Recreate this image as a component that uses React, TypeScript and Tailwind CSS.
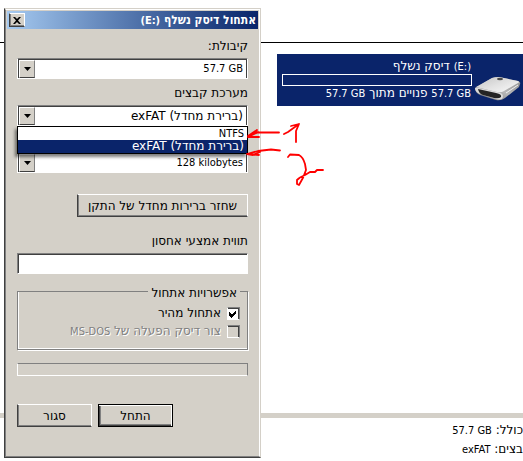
import type { ReactNode } from "react";

const LATIN = "font-['DejaVu_Sans_Condensed','DejaVu_Sans',sans-serif] text-[11px]";

const RAISED =
  "border border-t-white border-r-white border-b-[#404040] border-l-[#404040] shadow-[inset_1px_-1px_0_#808080]";

const isLatin = (s: string) => /^[\x20-\x7e]+$/.test(s);

function Ltr({ children }: { children: ReactNode }) {
  return (
    <bdi dir="ltr" className={LATIN}>
      {children}
    </bdi>
  );
}

interface ComboProps {
  id: string;
  label?: string;
  options: string[];
  value: string;
  open?: boolean;
}

function Combo({ id, label, options, value, open }: ComboProps) {
  return (
    <div>
      {label && (
        <label htmlFor={id} className="block h-5 leading-4">
          {label}
        </label>
      )}
      <div className="relative flex h-[21px] flex-row-reverse border border-t-[#808080] border-r-white border-b-white border-l-white bg-white">
        <span className="pointer-events-none flex w-[17px] shrink-0 border-t border-l border-[#404040]">
          <span className="flex flex-1 items-center justify-center border border-t-white border-r-[#808080] border-b-[#404040] border-l-white bg-[#d4d0c8]">
            <svg width="7" height="4" viewBox="0 0 7 4" aria-hidden="true">
              <path d="M0 0H7L3.5 4Z" fill="#000" />
            </svg>
          </span>
        </span>
        <select
          id={id}
          dir={isLatin(value) ? "ltr" : "rtl"}
          aria-label={label ?? "גודל יחידת הקצאה"}
          defaultValue={value}
          className={`min-w-0 flex-1 appearance-none border-t border-r border-[#404040] bg-white pr-[3px] text-right outline-none ${
            isLatin(value) ? LATIN : ""
          }`}
        >
          {options.map((o) => (
            <option key={o}>{o}</option>
          ))}
        </select>
        {open && (
          <ul className="absolute top-full -right-px -left-px z-10 mt-px border border-black bg-white leading-[13px] shadow-[-2px_3px_3px_rgba(0,0,0,0.5)]">
            {options.map((o) => (
              <li
                key={o}
                className={`h-[13px] px-[3px] ${o === value ? "bg-[#0a246a] text-white" : ""} ${isLatin(o) ? LATIN : ""}`}
              >
                {o}
              </li>
            ))}
          </ul>
        )}
      </div>
    </div>
  );
}

interface CheckProps {
  children: ReactNode;
  checked?: boolean;
  disabled?: boolean;
}

function Check({ children, checked, disabled }: CheckProps) {
  return (
    <label
      className={`flex h-[18px] items-center gap-[6px] whitespace-nowrap ${
        disabled ? "text-[#808080] [text-shadow:1px_1px_0_#fff]" : ""
      }`}
    >
      <span className="relative flex">
        <input
          type="checkbox"
          defaultChecked={checked}
          disabled={disabled}
          className={`size-[13px] appearance-none border border-t-[#808080] border-r-[#808080] border-b-white border-l-white shadow-[inset_-1px_1px_0_#404040] ${
            disabled ? "bg-[#d4d0c8]" : "bg-white"
          }`}
        />
        {checked && (
          <svg
            className="pointer-events-none absolute inset-0"
            width="13"
            height="13"
            viewBox="0 0 13 13"
            shapeRendering="crispEdges"
            aria-hidden="true"
          >
            <path d="M2 5h1v1h1v1h1v1h0v-1h1v-1h1v-1h1v-1h1v3h-1v1h-1v1h-1v1h-1v1h-1v-1h-1v-1h-1Z" fill="#000" />
          </svg>
        )}
      </span>
      <span>{children}</span>
    </label>
  );
}

function DriveIcon() {
  return (
    <svg width="46" height="24" viewBox="0 0 46 24" aria-hidden="true">
      <defs>
        <linearGradient id="top" x1="0" y1="0" x2="1" y2="1">
          <stop offset="0" stopColor="#c4c4c4" />
          <stop offset="0.5" stopColor="#e2e2e2" />
          <stop offset="1" stopColor="#fafafa" />
        </linearGradient>
        <linearGradient id="side" x1="0" y1="1" x2="1" y2="0">
          <stop offset="0" stopColor="#6a6a6a" />
          <stop offset="0.5" stopColor="#b8b8b8" />
          <stop offset="1" stopColor="#8c8c8c" />
        </linearGradient>
      </defs>
      <path d="M0 11 17 1Q20 0 24 0L43 4Q46 5 45 7L44 10 30 21Q26 24 21 23L5 18Q0 16 0 11Z" fill="url(#side)" />
      <path d="M1 10 17 1Q20 0 24 0L43 4Q45 5 43 6L29 14Q26 16 22 15L5 11Z" fill="url(#top)" />
      <path d="M0 11Q1 10 4 11L22 15Q28 16 28 19Q28 24 21 22L5 17Q0 15 0 11Z" fill="#dcdcdc" />
      <path d="M3 12 21 16Q27 17 26 20Q24 22 19 21L8 18Q4 17 3 12Z" fill="#242424" />
      <ellipse cx="25" cy="2" rx="3" ry="1.300" fill="#4a4a4a" />
      <path d="M31 16 43 8" stroke="#f2f2f2" strokeWidth="1" />
    </svg>
  );
}

function Explorer() {
  return (
    <main className="flex min-h-screen flex-col bg-white">
      <div className="h-[43px] border-b border-black" />
      <section className="flex-1 pt-[11px]">
        <div className="ml-[277px] flex h-[52px] items-center bg-[#0a246a] pl-[5px] text-white">
          <div className="w-[51px] shrink-0 self-end pr-[2px] pb-[5px]">
            <DriveIcon />
          </div>
          <div className="min-w-0 flex-1 leading-[15px] whitespace-nowrap">
            <p className="px-px">
              <Ltr>(E:)</Ltr> דיסק נשלף
            </p>
            <div className="h-3 border border-white" />
            <p className="px-px">
              <Ltr>57.7 GB</Ltr> פנויים מתוך <Ltr>57.7 GB</Ltr>
            </p>
          </div>
        </div>
      </section>
      <div className="h-[5px] bg-[#d4d0c8]" />
      <footer className="h-[43px] pt-[3px] leading-[18px]">
        <p>
          כולל: <Ltr>57.7 GB</Ltr>
        </p>
        <p>
          בצים: <Ltr>exFAT</Ltr>
        </p>
      </footer>
    </main>
  );
}

function FormatDialog() {
  return (
    <div
      role="dialog"
      aria-labelledby="title"
      className="absolute top-2 left-1 w-[257px] border border-t-[#d4d0c8] border-r-[#d4d0c8] border-b-[#404040] border-l-[#404040] bg-[#d4d0c8]"
    >
      <div className="border border-t-white border-r-white border-b-[#808080] border-l-[#808080] px-px pt-px">
        <header className="flex h-[18px] items-center justify-between bg-linear-to-l from-[#0a246a] to-[#a6caf0] px-[2px] text-white">
          <h1 id="title" className="font-['DejaVu_Sans_Condensed','DejaVu_Sans',sans-serif] font-bold">
            אתחול דיסק נשלף <Ltr>(E:)</Ltr>
          </h1>
          <button
            type="button"
            aria-label="סגור חלון"
            className={`flex h-[14px] w-4 items-center justify-center bg-[#d4d0c8] ${RAISED}`}
          >
            <svg width="8" height="7" viewBox="0 0 8 7" aria-hidden="true">
              <path d="M0 0h2l2 2 2-2h2L5 3.500 8 7H6L4 5 2 7H0l3-3.500Z" fill="#000" />
            </svg>
          </button>
        </header>

        <form className="px-[10px] pt-[9px] pb-[29px]" onSubmit={(e) => e.preventDefault()}>
          <Combo id="capacity" label="קיבולת:" options={["57.7 GB"]} value="57.7 GB" />
          <div className="mt-[6px]">
            <Combo
              id="fs"
              label="מערכת קבצים"
              options={["NTFS", "(ברירת מחדל) exFAT"]}
              value="(ברירת מחדל) exFAT"
              open
            />
          </div>
          <div className="mt-[26px]">
            <Combo id="unit" options={["128 kilobytes"]} value="128 kilobytes" />
          </div>

          <button type="button" className={`mt-[21px] block h-[23px] w-[171px] ${RAISED}`}>
            שחזר ברירות מחדל של התקן
          </button>

          <label htmlFor="volume" className="mt-4 block h-5 leading-4">
            תווית אמצעי אחסון
          </label>
          <input
            id="volume"
            type="text"
            className="block h-[21px] w-full border border-t-[#808080] border-r-white border-b-white border-l-[#808080] bg-white px-1 shadow-[inset_1px_1px_0_#404040] outline-none"
          />

          <fieldset className="mt-[7px] h-[69px] border border-[#808080] px-[7px] pt-[3px] shadow-[1px_1px_0_#fff,inset_1px_-1px_0_#fff]">
            <legend className="px-[3px] pt-1 leading-4">אפשרויות אתחול</legend>
            <Check checked>אתחול מהיר</Check>
            <Check disabled>
              צור דיסק הפעלה של <Ltr>MS-DOS</Ltr>
            </Check>
          </fieldset>

          <div
            role="progressbar"
            aria-label="התקדמות"
            className="mt-[13px] h-[13px] border border-t-[#808080] border-r-[#808080] border-b-white border-l-white"
          />

          <div className="mt-7 flex flex-row-reverse gap-[6px]">
            <button type="button" className={`h-[23px] w-[75px] ${RAISED}`}>
              סגור
            </button>
            <button
              type="submit"
              className="h-[23px] w-[75px] border border-black shadow-[inset_-1px_1px_0_#fff,inset_1px_-1px_0_#404040,inset_2px_-2px_0_#808080]"
            >
              התחל
            </button>
          </div>
        </form>
      </div>
    </div>
  );
}

// Red pen notes pointing at the two list items
function PenMarks() {
  return (
    <svg
      className="pointer-events-none absolute top-[120px] left-[244px] z-20"
      width="84"
      height="70"
      viewBox="0 0 84 70"
      fill="none"
      stroke="#f00"
      strokeWidth="1.8"
      strokeLinecap="round"
      strokeLinejoin="round"
      aria-hidden="true"
    >
      <path d="M35 12.500H14L4 16 13 10 8 15 14 12 4 17 15 17" />
      <path d="M36 30.500 27 29.500 14 31 3 34 15 35M16 32 9 35 3 34" />
      <path d="M40 14 44 12 55 4 52 11 52 22M47 6 55 4" />
      <path d="M44 37 46 34.500 55 35Q59 37 61 44L62 50Q60 57 55 65L53 64 53 60Q56 57 61 55L66 52 71 52 73 50 79 50" />
    </svg>
  );
}

export default function App() {
  return (
    <div
      dir="rtl"
      lang="he"
      className="relative overflow-hidden font-['DejaVu_Sans',sans-serif] text-xs text-black"
    >
      <Explorer />
      <FormatDialog />
      <PenMarks />
    </div>
  );
}
